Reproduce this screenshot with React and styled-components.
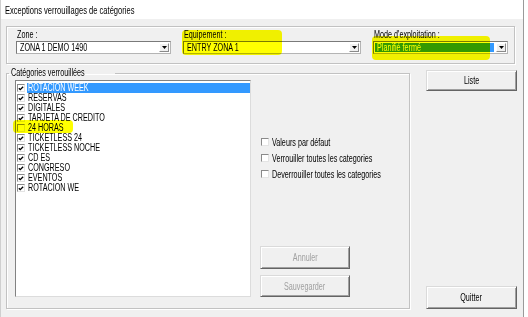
import React from 'react';
import styled, { createGlobalStyle } from 'styled-components';

const categories = [
  { name: 'ROTACION WEEK', checked: true, selected: true },
  { name: 'RESERVAS', checked: true },
  { name: 'DIGITALES', checked: true },
  { name: 'TARJETA DE CREDITO', checked: true },
  { name: '24 HORAS', checked: false },
  { name: 'TICKETLESS 24', checked: true },
  { name: 'TICKETLESS NOCHE', checked: true },
  { name: 'CD ES', checked: true },
  { name: 'CONGRESO', checked: true },
  { name: 'EVENTOS', checked: true },
  { name: 'ROTACION WE', checked: true },
];

const options = [
  'Valeurs par défaut',
  'Verrouiller toutes les categories',
  'Deverrouiller toutes les categories',
];

const App = () => {
  return (
    <>
      <GlobalStyle />
      <Window>
        <TitleBar>
          <Txt>Exceptions verrouillages de catégories</Txt>
        </TitleBar>
        <Body>
          <TopGroup>
            <Field $width={155}>
              <FieldLabel><Txt>Zone :</Txt></FieldLabel>
              <Combo value="ZONA 1 DEMO 1490" />
            </Field>
            <Field $width={178}>
              <FieldLabel><Txt>Equipement :</Txt></FieldLabel>
              <Combo value="ENTRY  ZONA 1" />
            </Field>
            <Field $width={135}>
              <FieldLabel><Txt>Mode d'exploitation :</Txt></FieldLabel>
              <Combo value="Planifié fermé" selected />
            </Field>
          </TopGroup>

          <MainRow>
            <CatGroup>
              <Legend><Txt>Catégories verrouillées</Txt></Legend>
              <GroupInner>
                <ListBox>
                  {categories.map((c) => (
                    <ListRow key={c.name}>
                      <Box>{c.checked && <CheckMark />}</Box>
                      <ItemText $selected={c.selected}>
                        <Txt>{c.name}</Txt>
                      </ItemText>
                    </ListRow>
                  ))}
                </ListBox>
                <SideCol>
                  <Options>
                    {options.map((o) => (
                      <OptionRow key={o}>
                        <Box />
                        <Txt>{o}</Txt>
                      </OptionRow>
                    ))}
                  </Options>
                  <SideButtons>
                    <Button $h={23} disabled><Txt $center>Annuler</Txt></Button>
                    <Button $h={22} disabled><Txt $center>Sauvegarder</Txt></Button>
                  </SideButtons>
                </SideCol>
              </GroupInner>
            </CatGroup>

            <RightCol>
              <Button $w={91} $h={21}><Txt $center>Liste</Txt></Button>
              <Button $w={91} $h={23}><Txt $center>Quitter</Txt></Button>
            </RightCol>
          </MainRow>
        </Body>

        <Marker style={{ left: 181, top: 30, width: 100, height: 25 }} />
        <Marker style={{ left: 371, top: 36, width: 118, height: 24 }} />
        <Marker style={{ left: 12, top: 120, width: 60, height: 13 }} />
      </Window>
    </>
  );
};

const Combo = ({ value, selected }) => (
  <ComboBox>
    <ComboValue $selected={selected}>
      <Txt>{value}</Txt>
    </ComboValue>
    <DropButton>
      <svg width="5" height="3" viewBox="0 0 5 3">
        <path d="M0 0h5L2.5 3z" fill="#000" />
      </svg>
    </DropButton>
  </ComboBox>
);

const CheckMark = () => (
  <svg width="7" height="7" viewBox="0 0 7 7">
    <path d="M1 3.2l1.6 1.6L6 1.4" fill="none" stroke="#000" strokeWidth="1.6" />
  </svg>
);

const GlobalStyle = createGlobalStyle`
  body {
    margin: 0;
    background: #fff;
    font-family: "Liberation Sans", Arial, sans-serif;
    font-size: 10px;
    color: #000;
  }
`;

const Txt = styled.span`
  display: inline-block;
  white-space: nowrap;
  transform: scaleX(0.72);
  transform-origin: ${(p) => (p.$center ? 'center' : 'left')} center;
`;

const Window = styled.div`
  position: relative;
  width: 524px;
  height: 317px;
  box-sizing: border-box;
  background: #f0f0f0;
  border-left: 1px solid #cfcfcf;
  border-right: 1px solid #9a9a9a;
  display: flex;
  flex-direction: column;
  overflow: hidden;
`;

const TitleBar = styled.div`
  height: 19px;
  background: #fff;
  padding-left: 4px;
  display: flex;
  align-items: center;
  font-size: 10.5px;
`;

const Body = styled.div`
  padding: 7px 0 0 5px;
  display: flex;
  flex-direction: column;
`;

const TopGroup = styled.div`
  width: 509px;
  height: 38px;
  box-sizing: border-box;
  border: 1px solid #c2c2c2;
  box-shadow: inset 1px 1px 0 #fff, 1px 1px 0 #fff;
  padding: 3px 0 0 9px;
  display: flex;
  gap: 12px;
`;

const Field = styled.div`
  width: ${(p) => p.$width}px;
  display: flex;
  flex-direction: column;
  gap: 1px;
`;

const FieldLabel = styled.div`
  height: 10px;
  line-height: 10px;
  padding-left: 1px;
`;

const ComboBox = styled.div`
  height: 13px;
  box-sizing: border-box;
  background: #fff;
  border: 1px solid #b4b4b4;
  border-top-color: #7a7a7a;
  border-left-color: #7a7a7a;
  padding: 0 1px;
  display: flex;
  align-items: center;
`;

const ComboValue = styled.div`
  flex: 1;
  height: 9px;
  line-height: 9px;
  padding-left: 2px;
  background: ${(p) => (p.$selected ? '#3399ff' : 'transparent')};
  color: ${(p) => (p.$selected ? '#fff' : '#000')};
  overflow: hidden;
`;

const DropButton = styled.div`
  width: 10px;
  height: 9px;
  margin-left: 2px;
  box-sizing: border-box;
  background: #f0f0f0;
  border: 1px solid #fff;
  border-right-color: #8a8a8a;
  border-bottom-color: #8a8a8a;
  display: flex;
  align-items: center;
  justify-content: center;
`;

const MainRow = styled.div`
  display: flex;
  margin-top: 4px;
  gap: 16px;
`;

const CatGroup = styled.fieldset`
  width: 404px;
  box-sizing: border-box;
  margin: 0;
  min-width: 0;
  padding: 2px 2px 10px 2px;
  border: 1px solid #c2c2c2;
  box-shadow: inset 1px 1px 0 #fff, 1px 1px 0 #fff;
`;

const Legend = styled.legend`
  padding: 0 2px;
  height: 10px;
  line-height: 10px;
`;

const GroupInner = styled.div`
  display: flex;
  padding-left: 6px;
`;

const ListBox = styled.div`
  width: 236px;
  height: 217px;
  box-sizing: border-box;
  background: #fff;
  border: 1px solid #dcdcdc;
  border-top-color: #828282;
  border-left-color: #828282;
  padding: 2px 0 0 1px;
`;

const ListRow = styled.div`
  height: 10px;
  display: flex;
  align-items: center;
  gap: 2px;
`;

const Box = styled.div`
  width: 8px;
  height: 8px;
  box-sizing: border-box;
  background: #fff;
  border: 1px solid #e4e4e4;
  border-top-color: #8a8a8a;
  border-left-color: #8a8a8a;
  display: flex;
  align-items: center;
  justify-content: center;
  flex-shrink: 0;
`;

const ItemText = styled.div`
  flex: 1;
  height: 10px;
  line-height: 10px;
  padding-left: 1px;
  background: ${(p) => (p.$selected ? '#3399ff' : 'transparent')};
  color: ${(p) => (p.$selected ? '#fff' : '#000')};
`;

const SideCol = styled.div`
  width: 90px;
  margin-left: 9px;
  display: flex;
  flex-direction: column;
  padding-top: 54px;
`;

const Options = styled.div`
  display: flex;
  flex-direction: column;
`;

const OptionRow = styled.div`
  height: 16px;
  display: flex;
  align-items: center;
  gap: 3px;
  padding-left: 1px;
`;

const SideButtons = styled.div`
  margin-top: auto;
  display: flex;
  flex-direction: column;
  gap: 6px;
`;

const Button = styled.button`
  width: ${(p) => (p.$w ? `${p.$w}px` : '100%')};
  height: ${(p) => p.$h}px;
  box-sizing: border-box;
  padding: 0;
  background: #f0f0f0;
  border: 1px solid #dadada;
  border-right-color: #646464;
  border-bottom-color: #646464;
  box-shadow: inset 1px 1px 0 #fff, inset -1px -1px 0 #a0a0a0;
  font-family: inherit;
  font-size: 10px;
  color: #000;
  display: flex;
  align-items: center;
  justify-content: center;

  &:disabled {
    color: #a0a0a0;
  }
`;

const RightCol = styled.div`
  height: 241px;
  padding-top: 2px;
  box-sizing: border-box;
  display: flex;
  flex-direction: column;
  justify-content: space-between;
`;

const Marker = styled.div`
  position: absolute;
  background: #ffff00;
  mix-blend-mode: multiply;
  border-radius: 4px;
  pointer-events: none;
`;

export default App;
